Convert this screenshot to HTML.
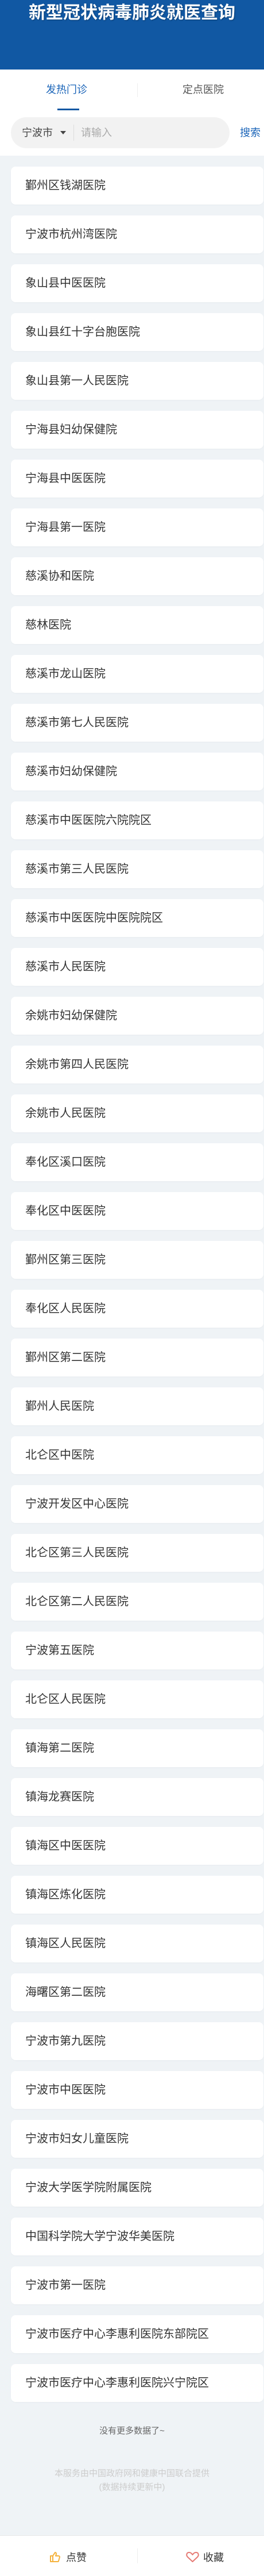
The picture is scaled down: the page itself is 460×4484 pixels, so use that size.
<!DOCTYPE html>
<html><head><meta charset="utf-8"><style>
*{margin:0;padding:0;box-sizing:border-box}
body{width:460px;height:4484px;background:#eff3f6;font-family:"Liberation Sans","Noto Sans CJK SC",sans-serif;position:relative;overflow:hidden}
.hd{height:121px;background:#1158a3;color:#fff;font-size:30px;font-weight:bold;text-align:center;padding-top:5px;line-height:36px;text-shadow:1px 1px 2px rgba(0,0,0,.3)}
.top{background:#fff;height:150px;position:relative}
.tab{position:absolute;top:22px;font-size:18px;line-height:26px}
.t1{left:80px;color:#1a64b8}.t2{left:318px;color:#555}
.line{position:absolute;left:100px;top:68px;width:38px;height:3px;background:#1158a3}
.vd{position:absolute;left:239px;top:24px;width:1px;height:24px;background:#eee}
.sb{position:absolute;left:19px;top:83px;width:381px;height:54px;background:#f2f2f2;border-radius:27px}
.city{position:absolute;left:19px;top:14px;font-size:18px;color:#444;line-height:26px}
.tri{position:absolute;left:86px;top:24px;border:5px solid transparent;border-top:6px solid #444}
.sd{position:absolute;left:109px;top:13px;width:1px;height:28px;background:#ddd}
.ph{position:absolute;left:122px;top:14px;font-size:18px;color:#aaa;line-height:26px}
.ss{position:absolute;left:418px;top:97px;font-size:18px;color:#1a64b8;line-height:26px;white-space:nowrap}
.list{position:absolute;left:19px;top:290px;width:440px}
.c{height:66px;margin-bottom:19px;background:#fff;border-radius:8px;font-size:20px;color:#333;line-height:66px;padding-left:25px;white-space:nowrap;box-shadow:0 1px 2px rgba(0,0,0,.03)}
.nm{position:absolute;top:4220px;width:100%;text-align:center;font-size:15px;color:#666}
.gv{position:absolute;top:4294px;width:100%;text-align:center;font-size:15px;color:#ccc;line-height:24px}
.ft{position:absolute;top:4413px;left:0;width:460px;height:71px;background:#fff;border-top:1px solid #e8e8e8}
.fi{position:absolute;top:25px;font-size:18px;color:#333;line-height:26px}
</style></head><body>
<div class="hd">新型冠状病毒肺炎就医查询</div>
<div class="top">
<div class="tab t1">发热门诊</div><div class="vd"></div><div class="tab t2">定点医院</div>
<div class="line"></div>
<div class="sb"><div class="city">宁波市</div><div class="tri"></div><div class="sd"></div><div class="ph">请输入</div></div>
<div class="ss">搜索</div>
</div>
<div class="list">
<div class="c">鄞州区钱湖医院</div>
<div class="c">宁波市杭州湾医院</div>
<div class="c">象山县中医医院</div>
<div class="c">象山县红十字台胞医院</div>
<div class="c">象山县第一人民医院</div>
<div class="c">宁海县妇幼保健院</div>
<div class="c">宁海县中医医院</div>
<div class="c">宁海县第一医院</div>
<div class="c">慈溪协和医院</div>
<div class="c">慈林医院</div>
<div class="c">慈溪市龙山医院</div>
<div class="c">慈溪市第七人民医院</div>
<div class="c">慈溪市妇幼保健院</div>
<div class="c">慈溪市中医医院六院院区</div>
<div class="c">慈溪市第三人民医院</div>
<div class="c">慈溪市中医医院中医院院区</div>
<div class="c">慈溪市人民医院</div>
<div class="c">余姚市妇幼保健院</div>
<div class="c">余姚市第四人民医院</div>
<div class="c">余姚市人民医院</div>
<div class="c">奉化区溪口医院</div>
<div class="c">奉化区中医医院</div>
<div class="c">鄞州区第三医院</div>
<div class="c">奉化区人民医院</div>
<div class="c">鄞州区第二医院</div>
<div class="c">鄞州人民医院</div>
<div class="c">北仑区中医院</div>
<div class="c">宁波开发区中心医院</div>
<div class="c">北仑区第三人民医院</div>
<div class="c">北仑区第二人民医院</div>
<div class="c">宁波第五医院</div>
<div class="c">北仑区人民医院</div>
<div class="c">镇海第二医院</div>
<div class="c">镇海龙赛医院</div>
<div class="c">镇海区中医医院</div>
<div class="c">镇海区炼化医院</div>
<div class="c">镇海区人民医院</div>
<div class="c">海曙区第二医院</div>
<div class="c">宁波市第九医院</div>
<div class="c">宁波市中医医院</div>
<div class="c">宁波市妇女儿童医院</div>
<div class="c">宁波大学医学院附属医院</div>
<div class="c">中国科学院大学宁波华美医院</div>
<div class="c">宁波市第一医院</div>
<div class="c">宁波市医疗中心李惠利医院东部院区</div>
<div class="c">宁波市医疗中心李惠利医院兴宁院区</div>
</div>
<div class="nm">没有更多数据了~</div>
<div class="gv">本服务由中国政府网和健康中国联合提供<br>(数据持续更新中)</div>
<div class="ft">
<svg style="position:absolute;left:86px;top:27px" width="20" height="20" viewBox="0 0 20 20"><path d="M2 8h4v10H2z M6 8l4-6c2 0 2 2 2 3l-1 3h5c1 0 2 1 2 2l-2 7c0 1-1 1-2 1H6" fill="none" stroke="#f5b23c" stroke-width="2" stroke-linejoin="round"/></svg>
<div class="fi" style="left:115px">点赞</div>
<div style="position:absolute;left:239px;top:22px;width:1px;height:26px;background:#eee"></div>
<svg style="position:absolute;left:324px;top:27px" width="23" height="20" viewBox="0 0 23 20"><path d="M11.5 18L3 10C0 7 1 2 5.5 2c3 0 4.5 2 6 4 1.5-2 3-4 6-4C22 2 23 7 20 10z" fill="none" stroke="#e57a74" stroke-width="2" stroke-linejoin="round"/></svg>
<div class="fi" style="left:354px">收藏</div>
</div>
</body></html>
